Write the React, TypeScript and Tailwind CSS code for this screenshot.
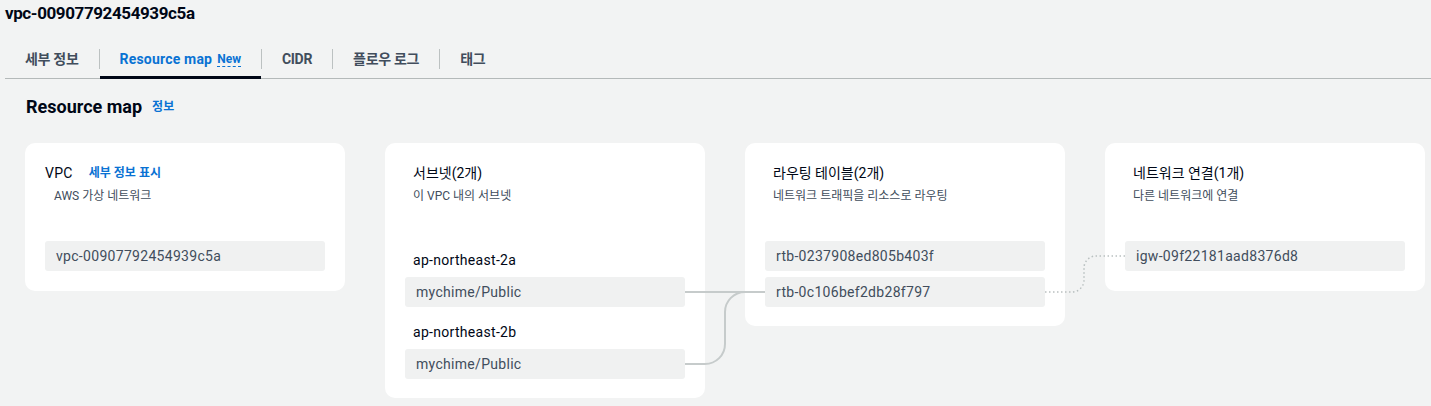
const font = "font-['Roboto','Noto_Sans_CJK_KR',sans-serif]"

const tabs = [
  { label: "세부 정보" },
  { label: "Resource map", badge: "New", active: true },
  { label: "CIDR" },
  { label: "플로우 로그" },
  { label: "태그" },
]

function Item({ children }: { children: React.ReactNode }) {
  return (
    <div className="h-[30px] rounded-[3px] bg-[#f0f1f1] px-[11px] flex items-center text-[14px] tracking-[0.3px] text-[#414d5c]">
      {children}
    </div>
  )
}

function CardHeader({ title, subtitle }: { title: string; subtitle: string }) {
  return (
    <div className="pl-[8px]">
      <div className="text-[14px] leading-5 text-[#000716]">{title}</div>
      <div className="mt-[5px] text-[12px] leading-4 text-[#414d5c]">{subtitle}</div>
    </div>
  )
}

export default function App() {
  return (
    <div className={`${font} w-full h-[406px] overflow-hidden bg-[#f2f3f3] text-[#000716]`}>
      {/* Page title */}
      <div className="pl-[5px] pt-[2px] text-[17px] font-bold leading-[22px] tracking-[-0.4px]">vpc-00907792454939c5a</div>

      {/* Tabs */}
      <div className="mt-[16px] ml-[5px] flex items-center border-b border-[#b4b9b9]">
        {tabs.map((tab, i) => (
          <div key={tab.label} className="flex items-center">
            {i > 0 && <div className="w-px h-[20px] bg-[#bcc1c1]" />}
            <div
              className={`relative h-[38px] px-[20px] flex items-center text-[14px] font-bold ${
                tab.active ? "text-[#0972d3]" : "text-[#414d5c]"
              }`}
            >
              <span className={tab.active ? "tracking-[0.2px]" : "tracking-[-0.3px]"}>{tab.label}</span>
              {tab.badge && (
                <span className="ml-[5px] text-[12px] border-b border-dashed border-[#0972d3] leading-[14px]">
                  {tab.badge}
                </span>
              )}
              {tab.active && <span className="absolute left-0 right-0 bottom-[-1px] h-[3px] bg-[#000716]" />}
            </div>
          </div>
        ))}
      </div>

      {/* Section heading */}
      <div className="mt-[17px] pl-[26px] flex items-center gap-[10px]">
        <h2 className="text-[18px] font-bold leading-[22px]">Resource map</h2>
        <span className="text-[12px] font-bold text-[#0972d3]">정보</span>
      </div>

      {/* Cards */}
      <div className="relative mt-[25px] ml-[25px] flex items-start gap-[40px]">
        {/* VPC */}
        <div className="w-[320px] rounded-[10px] bg-white px-[20px] pt-[20px] pb-[20px]">
          <div className="flex items-center gap-[16px] leading-5">
            <span className="text-[14px] tracking-[0.3px]">VPC</span>
            <span className="text-[12px] font-bold text-[#0972d3]">세부 정보 표시</span>
          </div>
          <div className="mt-[5px] pl-[9px] text-[12px] leading-4 text-[#414d5c]">AWS 가상 네트워크</div>
          <div className="mt-[37px]">
            <Item>vpc-00907792454939c5a</Item>
          </div>
        </div>

        {/* Subnets */}
        <div className="w-[320px] rounded-[10px] bg-white px-[20px] pt-[20px] pb-[19px]">
          <CardHeader title="서브넷(2개)" subtitle="이 VPC 내의 서브넷" />
          <div className="mt-[37px]">
            <div className="pt-[9px] pl-[8px] text-[14px] leading-5 tracking-[0.3px]">ap-northeast-2a</div>
            <div className="mt-[7px]">
              <Item>mychime/Public</Item>
            </div>
            <div className="pt-[15px] pl-[8px] text-[14px] leading-5 tracking-[0.3px]">ap-northeast-2b</div>
            <div className="mt-[7px]">
              <Item>mychime/Public</Item>
            </div>
          </div>
        </div>

        {/* Route tables */}
        <div className="w-[320px] rounded-[10px] bg-white px-[20px] pt-[20px] pb-[19px]">
          <CardHeader title="라우팅 테이블(2개)" subtitle="네트워크 트래픽을 리소스로 라우팅" />
          <div className="mt-[37px] flex flex-col gap-[6px]">
            <Item>rtb-0237908ed805b403f</Item>
            <Item>rtb-0c106bef2db28f797</Item>
          </div>
        </div>

        {/* Network connections */}
        <div className="w-[320px] rounded-[10px] bg-white px-[20px] pt-[20px] pb-[20px]">
          <CardHeader title="네트워크 연결(1개)" subtitle="다른 네트워크에 연결" />
          <div className="mt-[37px]">
            <Item>igw-09f22181aad8376d8</Item>
          </div>
        </div>

        {/* Connectors */}
        <svg className="absolute left-0 top-0 pointer-events-none" width="1406" height="263" fill="none">
          <path d="M660 149 H740" stroke="#c6cbcb" strokeWidth="2" />
          <path
            d="M660 221 H680 A20 20 0 0 0 700 201 V169 A20 20 0 0 1 720 149 H740"
            stroke="#c6cbcb"
            strokeWidth="2"
          />
          <path
            d="M1020 149 H1047 A12 12 0 0 0 1059 137 V125 A12 12 0 0 1 1071 113 H1100"
            stroke="#b9c0c0"
            strokeWidth="1.5"
            strokeDasharray="1.5 2.5"
          />
        </svg>
      </div>
    </div>
  )
}
